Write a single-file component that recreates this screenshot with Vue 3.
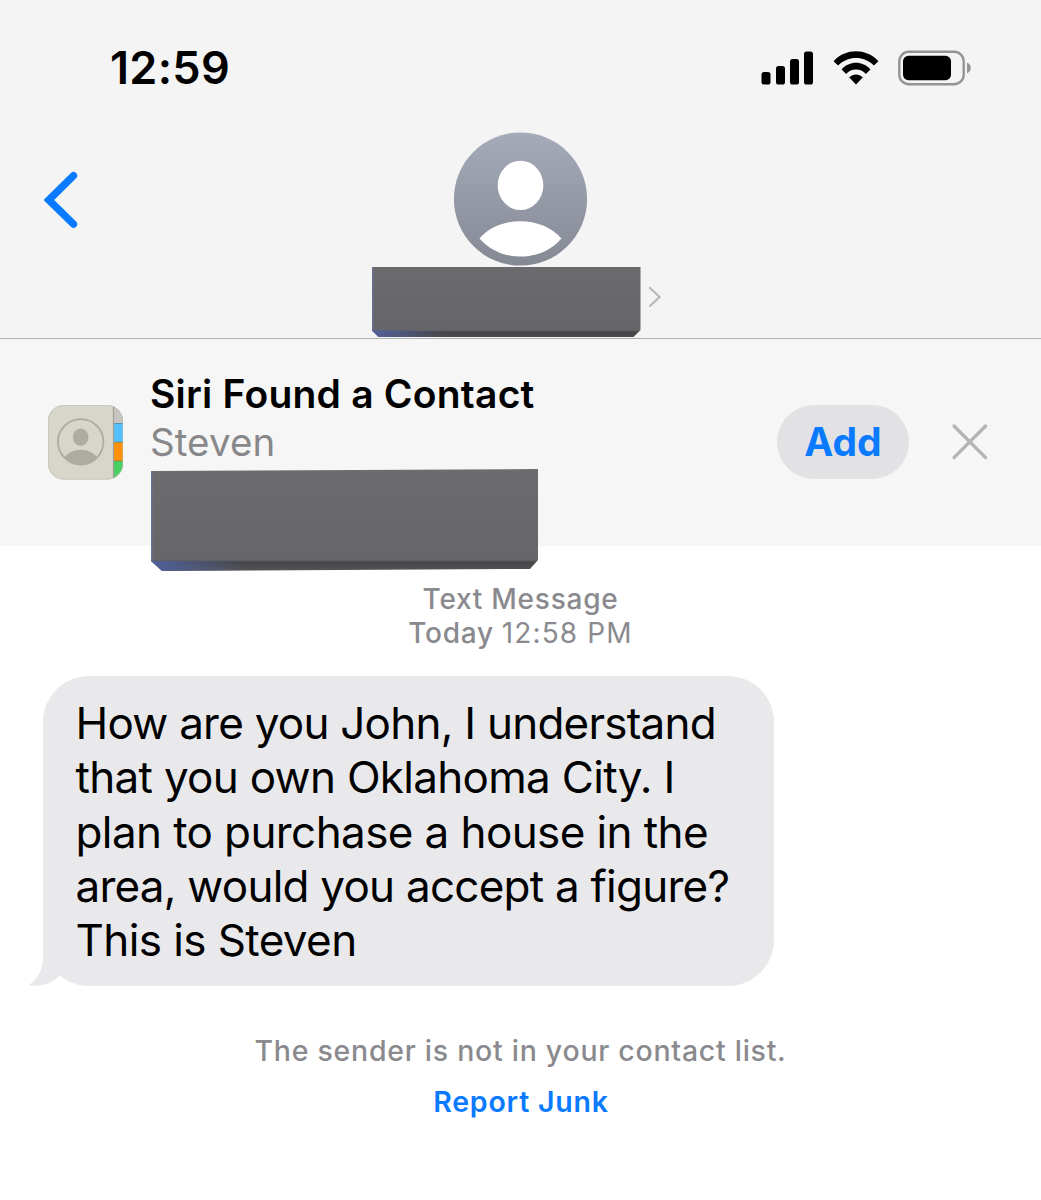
<template>
    <div class="screen">
        <header class="nav">
            <div class="status-bar">
                <span class="clock">12:59</span>
                <div class="status-icons">
                    <svg class="icon-signal" width="54" height="34" viewBox="0 0 54 34">
                        <rect x="0.5" y="21" width="9" height="12.5" rx="2.6" />
                        <rect x="15" y="15" width="9" height="18.5" rx="2.6" />
                        <rect x="29" y="8" width="9" height="25.5" rx="2.6" />
                        <rect x="43" y="0.5" width="9" height="33" rx="2.6" />
                    </svg>
                    <svg class="icon-wifi" width="46" height="34" viewBox="0 0 46 34">
                        <path d="M0.6 10.2 C12.6 -3 33.4 -3 45.4 10.2 L40.9 14.6 C31.2 4.4 14.8 4.4 5.1 14.6 Z" />
                        <path d="M8.6 18.4 C16.2 9.6 29.8 9.6 37.4 18.4 L32.9 22.9 C27.8 17 18.2 17 13.1 22.9 Z" />
                        <path d="M16.3 26.6 C20 22.3 26 22.3 29.7 26.6 L23 33.4 Z" />
                    </svg>
                    <svg class="icon-battery" width="74" height="36" viewBox="0 0 74 36">
                        <rect x="1.3" y="1.8" width="64.4" height="32.4" rx="9.5" fill="none" stroke="#949494" stroke-width="2.4" />
                        <rect x="5" y="5.8" width="48" height="24.4" rx="5.5" />
                        <path d="M69 12.6 C74 14.6 74 21.4 69 23.4 Z" fill="#949494" />
                    </svg>
                </div>
            </div>

            <div class="contact-row">
                <button class="back-btn" aria-label="Back">
                    <svg width="34" height="58" viewBox="0 0 34 58">
                        <path d="M29.5 4.7 L4.8 29 L29.5 53.2" fill="none" stroke="#0a7aff" stroke-width="7.4" stroke-linecap="round" stroke-linejoin="miter" />
                    </svg>
                </button>
                <div class="contact">
                    <svg class="avatar" width="134" height="134" viewBox="0 0 134 134">
                        <defs>
                            <linearGradient id="avatarFill" x1="0" y1="0" x2="0" y2="1">
                                <stop offset="0" stop-color="#a5abb9" />
                                <stop offset="1" stop-color="#858994" />
                            </linearGradient>
                        </defs>
                        <circle cx="66.5" cy="67" r="66.6" fill="url(#avatarFill)" />
                        <ellipse cx="66.5" cy="53.4" rx="22.8" ry="24.7" fill="#fff" />
                        <path d="M25.5 106.4 C45.5 83.4 87.5 83.4 107.5 106.4 C86.5 130.6 46.5 130.6 25.5 106.4 Z" fill="#fff" />
                    </svg>
                    <div class="contact-name">
                        <span class="redacted redacted-name"></span>
                        <svg class="chevron" width="14" height="22" viewBox="0 0 14 22">
                            <path d="M2 2 L11.5 11 L2 20" fill="none" stroke="#b9b9bb" stroke-width="2.3" stroke-linecap="round" />
                        </svg>
                    </div>
                </div>
            </div>
        </header>

        <section class="siri-banner">
            <svg class="contacts-icon" width="75" height="75" viewBox="0 0 75 75">
                <defs>
                    <clipPath id="appShape"><rect width="75" height="74.5" rx="16" /></clipPath>
                    <clipPath id="personShape"><circle cx="32.7" cy="36.8" r="22.5" /></clipPath>
                </defs>
                <g clip-path="url(#appShape)">
                    <rect width="75" height="75" fill="#b9b8ae" />
                    <rect x="65" width="10" height="18" fill="#c6c5c1" />
                    <rect x="65" y="18" width="10" height="19" fill="#54c0fa" />
                    <rect x="65" y="37" width="10" height="19" fill="#fd9209" />
                    <rect x="65" y="56" width="10" height="19" fill="#46d160" />
                    <path d="M65 18.5 h10 M65 37.3 h10 M65 56 h10" stroke="#55706a" stroke-opacity="0.5" stroke-width="1" />
                    <rect width="65.3" height="75" fill="#d7d6ca" />
                    <path d="M65.5 0 V75" stroke="#a09f95" stroke-width="1.2" />
                </g>
                <rect x="0.5" y="0.5" width="74" height="73.5" rx="15.5" fill="none" stroke="#bcbbb1" stroke-opacity="0.45" />
                <g clip-path="url(#personShape)" fill="#aeaca1">
                    <ellipse cx="32.7" cy="32.2" rx="7.8" ry="8.6" />
                    <ellipse cx="32.7" cy="58" rx="18" ry="13.2" />
                </g>
                <circle cx="32.7" cy="36.8" r="22.7" fill="none" stroke="#aeaca1" stroke-width="1.8" />
            </svg>
            <div class="siri-text">
                <span class="siri-title">Siri Found a Contact</span>
                <span class="siri-name">Steven</span>
                <span class="redacted redacted-number"></span>
            </div>
            <button class="add-btn">Add</button>
            <button class="close-btn" aria-label="Close">
                <svg width="38" height="38" viewBox="0 0 38 38">
                    <path d="M3 3 L34.6 34.6 M34.6 3 L3 34.6" fill="none" stroke="#b4b4b6" stroke-width="3.3" stroke-linecap="round" />
                </svg>
            </button>
        </section>

        <main class="thread">
            <div class="stamp">
                <span class="stamp-kind">Text Message</span>
                <span class="stamp-date"><b>Today</b> <span class="stamp-time">12:58 PM</span></span>
            </div>
            <div class="bubble">
                <span v-for="line in messageLines" :key="line" class="bubble-line">{{ line }}</span>
                <svg class="bubble-tail" width="34" height="48" viewBox="0 0 34 48">
                    <path d="M15 0 V18 C15 32 10 41 0.5 47.2 C13 49.4 24 45.5 32 37.6 L24 0 Z" fill="#e9e9eb" />
                </svg>
            </div>
            <p class="unknown-sender">The sender is not in your contact list.</p>
            <button class="junk-btn">Report Junk</button>
        </main>
    </div>
</template>

<script setup>
import { ref } from 'vue';

// 말풍선 안에서 줄바꿈되는 단위로 나눈 메시지
const messageLines = ref([
    "How are you John, I understand",
    "that you own Oklahoma City. I",
    "plan to purchase a house in the",
    "area, would you accept a figure?",
    "This is Steven",
]);
</script>

<style>
body {
    margin : 0;
    background : #fff;
}
</style>

<style scoped>
.screen {
    width : 1041px;
    height : 1200px;
    overflow : hidden;
    background : #fff;
    color : #000;
    font-family : Inter, "Liberation Sans", sans-serif;
}

button {
    padding : 0;
    border : none;
    background : none;
    font-family : inherit;
}

svg {
    display : block;
}

/* 상단 상태바 + 연락처 영역 */
.nav {
    height : 338px;
    border-bottom : 1px solid #b0b0b2;
    background : #f4f4f4;
}

.status-bar {
    display : flex;
    align-items : flex-start;
    justify-content : space-between;
    height : 132px;
    box-sizing : border-box;
    padding : 42px 69px 0 110px;
}

.clock {
    font-size : 45px;
    font-weight : 600;
    line-height : 52px;
    letter-spacing : 0.3px;
}

.status-icons {
    display : flex;
    align-items : center;
    padding-top : 8px;
}

.icon-wifi {
    margin-left : 18px;
}

.icon-battery {
    margin-left : 19px;
}

.contact-row {
    display : grid;
    grid-template-columns : 1fr 301px 1fr;
    align-items : start;
}

.back-btn {
    justify-self : start;
    margin : 39px 0 0 44px;
}

.contact {
    display : flex;
    flex-direction : column;
    align-items : center;
}

.contact-name {
    display : flex;
    align-items : center;
    gap : 7px;
    margin-top : 1px;
    margin-left : -10px;
}

.redacted {
    display : block;
    flex : none;
}

.redacted-name {
    width : 269px;
    height : 70px;
    margin-left : 2px;
    background :
        linear-gradient(90deg, #53609a 0, rgba(80, 86, 110, 0) 26%) bottom / 100% 7px no-repeat,
        linear-gradient(90deg, #6872a0 0, rgba(107, 107, 109, 0) 2px),
        linear-gradient(#6b6b6d 0, #666668 63px, #454547 65px, #4c4c4e 100%);
    clip-path : polygon(0 0, 100% 0, 100% 63px, 262px 100%, 7px 100%, 0 63px);
}

.chevron {
    margin-top : -11px;
}

/* Siri 연락처 제안 배너 */
.siri-banner {
    display : flex;
    align-items : flex-start;
    height : 206.5px;
    box-sizing : border-box;
    padding : 31px 52px 0 48px;
    background : #f6f6f6;
}

.contacts-icon {
    flex : none;
    margin-top : 35px;
}

.siri-text {
    display : flex;
    flex-direction : column;
    flex : 1;
    padding-left : 27px;
}

.siri-title {
    font-size : 39px;
    font-weight : 600;
    line-height : 48px;
    letter-spacing : 0.22px;
}

.siri-name {
    font-size : 38.5px;
    line-height : 48px;
    letter-spacing : 0.1px;
    color : #88888a;
}

.redacted-number {
    position : relative;
    width : 387px;
    height : 102px;
    margin : 3px 0 0 1px;
    background :
        linear-gradient(90deg, #50609c 0, rgba(80, 86, 110, 0) 24%) bottom / 100% 10px no-repeat,
        linear-gradient(90deg, #6878ac 0, rgba(107, 107, 109, 0) 2px),
        linear-gradient(#6c6c6e 0, #666668 91px, #464648 93px, #555557 100%);
    clip-path : polygon(0 2px, 100% 0, 100% 91px, 379px 100px, 11px 100%, 0 92px);
}

.add-btn {
    width : 132px;
    height : 74px;
    margin-top : 35px;
    border-radius : 37px;
    background : #e2e2e4;
    color : #0a7aff;
    font-size : 39px;
    font-weight : 700;
    line-height : 74px;
}

.close-btn {
    margin : 53px 0 0 42px;
}

/* 메시지 영역 */
.thread {
    display : flex;
    flex-direction : column;
    align-items : center;
    padding-top : 36px;
}

.stamp {
    display : flex;
    flex-direction : column;
    align-items : center;
    color : #8a8a8e;
    font-size : 28px;
    line-height : 34.7px;
}

.stamp-kind,
.stamp-date b {
    font-weight : 500;
    letter-spacing : 0.75px;
}

.stamp-time {
    letter-spacing : 1.15px;
}

.bubble {
    position : relative;
    display : flex;
    flex-direction : column;
    align-self : flex-start;
    width : 731px;
    height : 310px;
    box-sizing : border-box;
    margin : 25px 0 0 43px;
    padding : 20px 0 0 32.5px;
    border-radius : 46px;
    background : #e9e9eb;
}

.bubble-line {
    font-size : 44px;
    line-height : 54.3px;
    letter-spacing : -0.7px;
    white-space : nowrap;
}

.bubble-line:nth-child(1),
.bubble-line:nth-child(4) {
    letter-spacing : -0.76px;
}

.bubble-line:nth-child(3),
.bubble-line:nth-child(5) {
    letter-spacing : -0.6px;
}

.bubble-tail {
    position : absolute;
    left : -15px;
    bottom : 0;
}

.unknown-sender {
    margin : 48.5px 0 0;
    color : #8a8a8e;
    font-size : 28.5px;
    font-weight : 500;
    line-height : 34px;
    letter-spacing : 0.73px;
}

.junk-btn {
    margin : 17px 0 0 1px;
    color : #0a7aff;
    font-size : 28.5px;
    font-weight : 600;
    line-height : 34px;
    letter-spacing : 0.8px;
}
</style>
